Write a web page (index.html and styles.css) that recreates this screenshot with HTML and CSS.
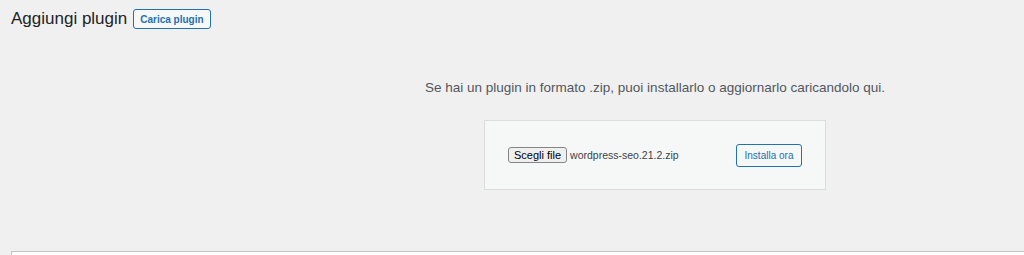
FILE: index.html
```html
<!DOCTYPE html>
<html lang="it">
<head>
<meta charset="utf-8">
<title>Aggiungi plugin</title>
<link rel="stylesheet" href="styles.css">
</head>
<body>
<div class="wrap">
  <div class="header">
    <h1 class="title">Aggiungi plugin</h1>
    <a class="page-btn" href="#">Carica plugin</a>
  </div>
  <div class="upload">
    <p class="install-help">Se hai un plugin in formato .zip, puoi installarlo o aggiornarlo caricandolo qui.</p>
    <form class="upload-form">
      <span class="file-btn">Scegli file</span>
      <span class="file-name">wordpress-seo.21.2.zip</span>
      <span class="install-btn">Installa ora</span>
    </form>
  </div>
  <div class="panel"></div>
</div>
</body>
</html>
```
FILE: styles.css
```css
html, body {
  margin: 0;
  padding: 0;
}
body {
  background: #f0f0f1;
  font-family: "Liberation Sans", Arial, sans-serif;
  color: #3c434a;
  overflow: hidden;
  height: 255px;
}
.wrap {
  padding-left: 11px;
}
.header {
  display: flex;
  align-items: center;
  gap: 6px;
  padding-top: 9px;
  height: 20px;
}
.title {
  margin: 0;
  font-size: 17px;
  font-weight: 400;
  line-height: 20px;
  color: #1d2327;
}
.page-btn {
  display: flex;
  align-items: center;
  box-sizing: border-box;
  height: 20px;
  padding: 0 6px;
  border: 1px solid #2271b1;
  border-radius: 3px;
  background: #f6f7f7;
  color: #2271b1;
  font-size: 10px;
  font-weight: 700;
  text-decoration: none;
}
.upload {
  padding-left: 275px;
  display: flex;
  flex-direction: column;
  align-items: center;
}
.install-help {
  margin: 50px 0 23px;
  font-size: 13.5px;
  line-height: 18px;
  color: #50575e;
}
.upload-form {
  box-sizing: border-box;
  width: 342px;
  height: 70px;
  padding: 0 23px;
  display: flex;
  align-items: center;
  border: 1px solid #dcdcde;
  background: #f6f7f7;
  margin: 0;
}
.file-btn {
  box-sizing: border-box;
  height: 16px;
  padding: 0 5px;
  display: flex;
  align-items: center;
  border: 1px solid #858585;
  border-radius: 3px;
  background: #efefef;
  color: #000;
  font-size: 11px;
}
.file-name {
  margin-left: 3px;
  font-size: 10.5px;
  color: #3c434a;
}
.install-btn {
  margin-left: auto;
  box-sizing: border-box;
  width: 66px;
  height: 23px;
  display: flex;
  align-items: center;
  justify-content: center;
  border: 1px solid #2271b1;
  border-radius: 3px;
  background: #f6f7f7;
  color: #2271b1;
  font-size: 10px;
}
.panel {
  margin-top: 61px;
  height: 3px;
  background: #fff;
  border-top: 1px solid #c3c4c7;
  border-left: 1px solid #c3c4c7;
}
```
